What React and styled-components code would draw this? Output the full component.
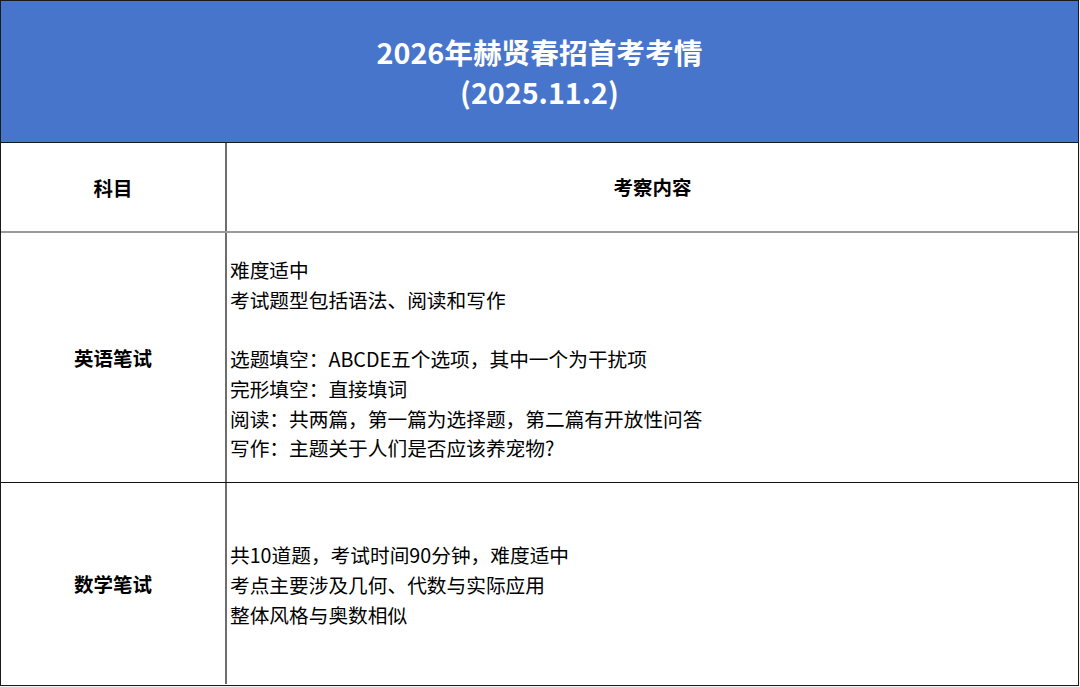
import React from "react"
import styled, { createGlobalStyle } from "styled-components"

const GlobalStyle = createGlobalStyle`
  html, body {
    margin: 0;
    padding: 0;
    background: #f2f2f2;
  }
  body {
    font-family: "Noto Sans CJK SC", "Noto Sans", sans-serif;
    color: #000;
  }
`

const Sheet = styled.div`
  box-sizing: border-box;
  width: 1079px;
  height: 686px;
  border: 1px solid #1a1a1a;
  background: #fff;
  display: flex;
  flex-direction: column;
`

const Banner = styled.div`
  height: 142px;
  flex: none;
  box-sizing: border-box;
  background: #4775cb;
  border-bottom: 1px solid #10182a;
  display: flex;
  flex-direction: column;
  align-items: center;
  justify-content: center;
  color: #fff;
  font-weight: 700;
  font-size: 28.7px;
  line-height: 40px;
`

const Row = styled.div`
  display: flex;
  flex: none;
  box-sizing: border-box;
  height: ${(p) => p.$h}px;
  border-bottom: ${(p) => p.$line || "none"};
`

const Subject = styled.div`
  box-sizing: border-box;
  width: 226px;
  flex: none;
  border-right: 2px solid #6e6e6e;
  display: flex;
  align-items: center;
  justify-content: center;
  font-weight: 700;
  font-size: 19.5px;
`

const Content = styled.div`
  flex: 1;
  display: flex;
  flex-direction: column;
  justify-content: center;
  align-items: ${(p) => (p.$center ? "center" : "flex-start")};
  padding: ${(p) => (p.$center ? "0" : "3px 0 0 3px")};
  font-size: ${(p) => (p.$center ? "19.5px" : "19.7px")};
  font-weight: ${(p) => (p.$center ? 700 : 400)};
  line-height: 29.7px;
`

const Line = styled.div`
  min-height: 29.7px;
  white-space: nowrap;
`

const english = [
  "难度适中",
  "考试题型包括语法、阅读和写作",
  "",
  "选题填空：ABCDE五个选项，其中一个为干扰项",
  "完形填空：直接填词",
  "阅读：共两篇，第一篇为选择题，第二篇有开放性问答",
  "写作：主题关于人们是否应该养宠物?",
]

const math = [
  "共10道题，考试时间90分钟，难度适中",
  "考点主要涉及几何、代数与实际应用",
  "整体风格与奥数相似",
]

const App = () => (
  <>
    <GlobalStyle />
    <Sheet>
      <Banner>
        <div>2026年赫贤春招首考考情</div>
        <div>(2025.11.2)</div>
      </Banner>
      <Row $h={90} $line="2px solid #9a9a9a">
        <Subject>科目</Subject>
        <Content $center>考察内容</Content>
      </Row>
      <Row $h={250} $line="1px solid #111">
        <Subject>英语笔试</Subject>
        <Content>
          {english.map((t, i) => (
            <Line key={i}>{t}</Line>
          ))}
        </Content>
      </Row>
      <Row $h={201}>
        <Subject>数学笔试</Subject>
        <Content>
          {math.map((t, i) => (
            <Line key={i}>{t}</Line>
          ))}
        </Content>
      </Row>
    </Sheet>
  </>
)

export default App
